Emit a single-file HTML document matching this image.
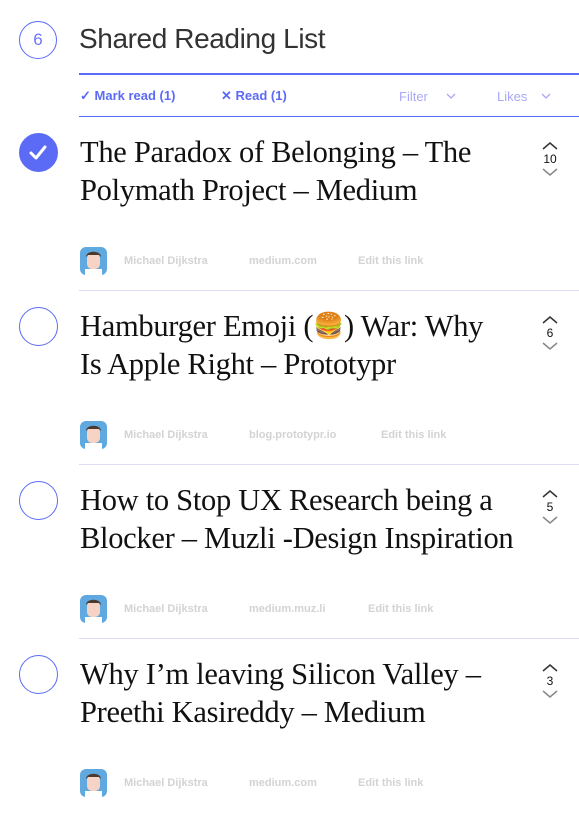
<!DOCTYPE html>
<html><head><meta charset="utf-8"><style>
*{margin:0;padding:0;box-sizing:border-box}
body{width:579px;height:822px;background:#fff;position:relative;overflow:hidden;font-family:"Liberation Sans",sans-serif}
.abs{position:absolute}
.num{left:19px;top:21px;width:38px;height:38px;border:1px solid #5b6bf5;border-radius:50%;color:#6b78f5;font-size:17px;text-align:center;line-height:36px;font-weight:300}
.h1{left:79px;top:23px;font-size:28px;color:#333;font-weight:300;letter-spacing:-0.4px}
.bar{left:79px;top:73px;width:500px;height:2px;background:#5b6bf5}
.bar2{left:79px;top:116px;width:500px;height:1px;background:#5b6bf5}
.tb{top:88px;font-size:13px;color:#5b6bf5;font-weight:bold}
.tl{top:89px;font-size:13px;color:#a9a8f8}
.item{position:absolute;left:0;width:579px;height:174px}
.circ{position:absolute;left:19px;top:16px;width:39px;height:39px;border:1.5px solid #5b6bf5;border-radius:50%}
.circ.on{background:#5b6bf5}
.title{position:absolute;left:80px;top:16px;width:460px;white-space:nowrap;font-family:"Liberation Serif",serif;font-size:30.5px;line-height:38px;color:#111;letter-spacing:-0.3px}
.title .e{font-size:25px;line-height:1;vertical-align:2px}
.vote{position:absolute;left:538px;top:22px;width:24px;text-align:center;font-size:12px;color:#111}
.av{position:absolute;left:80px;top:130px;width:27px;height:28px;border-radius:6px;background:#5fa8e0;overflow:hidden}
.meta{position:absolute;top:138px;font-size:11px;font-weight:bold;color:#d3d3d3}
.sep{position:absolute;left:79px;top:173px;width:500px;height:1px;background:#dcdcf5}
</style></head><body>
<div class="abs num">6</div>
<div class="abs h1">Shared Reading List</div>
<div class="abs bar"></div>
<div class="abs tb" style="left:80px">✓ Mark read (1)</div>
<div class="abs tb" style="left:221px">✕ Read (1)</div>
<div class="abs tl" style="left:399px">Filter <svg width="10" height="6" style="margin-left:14px;vertical-align:2px"><path d="M1 1l4 4 4-4" stroke="#a9a8f8" stroke-width="1.3" fill="none"/></svg></div>
<div class="abs tl" style="left:497px">Likes <svg width="10" height="6" style="margin-left:10px;vertical-align:2px"><path d="M1 1l4 4 4-4" stroke="#a9a8f8" stroke-width="1.3" fill="none"/></svg></div>
<div class="abs bar2"></div>

<div class="item" style="top:117px">
<div class="circ on"><svg width="36" height="36" viewBox="0 0 36 36"><path d="M11 19l5 5 9-11" stroke="#fff" stroke-width="3" fill="none" stroke-linecap="round" stroke-linejoin="round"/></svg></div>
<div class="title">The Paradox of Belonging – The<br>Polymath Project – Medium</div>
<div class="vote"><svg width="20" height="8"><path d="M3 7l7-6 7 6" stroke="#333" stroke-width="1.5" fill="none"/></svg><div style="line-height:12px">10</div><svg width="20" height="8"><path d="M3 1l7 6 7-6" stroke="#888" stroke-width="1.5" fill="none"/></svg></div>
<div class="av"><svg width="27" height="28"><rect x="7" y="6" width="13" height="16" rx="5" fill="#f6d3c4"/><path d="M6 10c0-7 15-7 15 0l-2-2h-11z" fill="#4a3a30"/><rect x="5" y="22" width="17" height="6" fill="#fff"/></svg></div>
<div class="meta" style="left:124px">Michael Dijkstra</div>
<div class="meta" style="left:249px">medium.com</div>
<div class="meta" style="left:358px">Edit this link</div>
<div class="sep"></div>
</div>

<div class="item" style="top:291px">
<div class="circ"></div>
<div class="title">Hamburger Emoji (<span class="e">🍔</span>) War: Why<br>Is Apple Right – Prototypr</div>
<div class="vote"><svg width="20" height="8"><path d="M3 7l7-6 7 6" stroke="#333" stroke-width="1.5" fill="none"/></svg><div style="line-height:12px">6</div><svg width="20" height="8"><path d="M3 1l7 6 7-6" stroke="#888" stroke-width="1.5" fill="none"/></svg></div>
<div class="av"><svg width="27" height="28"><rect x="7" y="6" width="13" height="16" rx="5" fill="#f6d3c4"/><path d="M6 10c0-7 15-7 15 0l-2-2h-11z" fill="#4a3a30"/><rect x="5" y="22" width="17" height="6" fill="#fff"/></svg></div>
<div class="meta" style="left:124px">Michael Dijkstra</div>
<div class="meta" style="left:249px">blog.prototypr.io</div>
<div class="meta" style="left:381px">Edit this link</div>
<div class="sep"></div>
</div>

<div class="item" style="top:465px">
<div class="circ"></div>
<div class="title">How to Stop UX Research being a<br>Blocker – Muzli -Design Inspiration</div>
<div class="vote"><svg width="20" height="8"><path d="M3 7l7-6 7 6" stroke="#333" stroke-width="1.5" fill="none"/></svg><div style="line-height:12px">5</div><svg width="20" height="8"><path d="M3 1l7 6 7-6" stroke="#888" stroke-width="1.5" fill="none"/></svg></div>
<div class="av"><svg width="27" height="28"><rect x="7" y="6" width="13" height="16" rx="5" fill="#f6d3c4"/><path d="M6 10c0-7 15-7 15 0l-2-2h-11z" fill="#4a3a30"/><rect x="5" y="22" width="17" height="6" fill="#fff"/></svg></div>
<div class="meta" style="left:124px">Michael Dijkstra</div>
<div class="meta" style="left:249px">medium.muz.li</div>
<div class="meta" style="left:368px">Edit this link</div>
<div class="sep"></div>
</div>

<div class="item" style="top:639px">
<div class="circ"></div>
<div class="title">Why I’m leaving Silicon Valley –<br>Preethi Kasireddy – Medium</div>
<div class="vote"><svg width="20" height="8"><path d="M3 7l7-6 7 6" stroke="#333" stroke-width="1.5" fill="none"/></svg><div style="line-height:12px">3</div><svg width="20" height="8"><path d="M3 1l7 6 7-6" stroke="#888" stroke-width="1.5" fill="none"/></svg></div>
<div class="av"><svg width="27" height="28"><rect x="7" y="6" width="13" height="16" rx="5" fill="#f6d3c4"/><path d="M6 10c0-7 15-7 15 0l-2-2h-11z" fill="#4a3a30"/><rect x="5" y="22" width="17" height="6" fill="#fff"/></svg></div>
<div class="meta" style="left:124px">Michael Dijkstra</div>
<div class="meta" style="left:249px">medium.com</div>
<div class="meta" style="left:358px">Edit this link</div>
</div>
</body></html>
